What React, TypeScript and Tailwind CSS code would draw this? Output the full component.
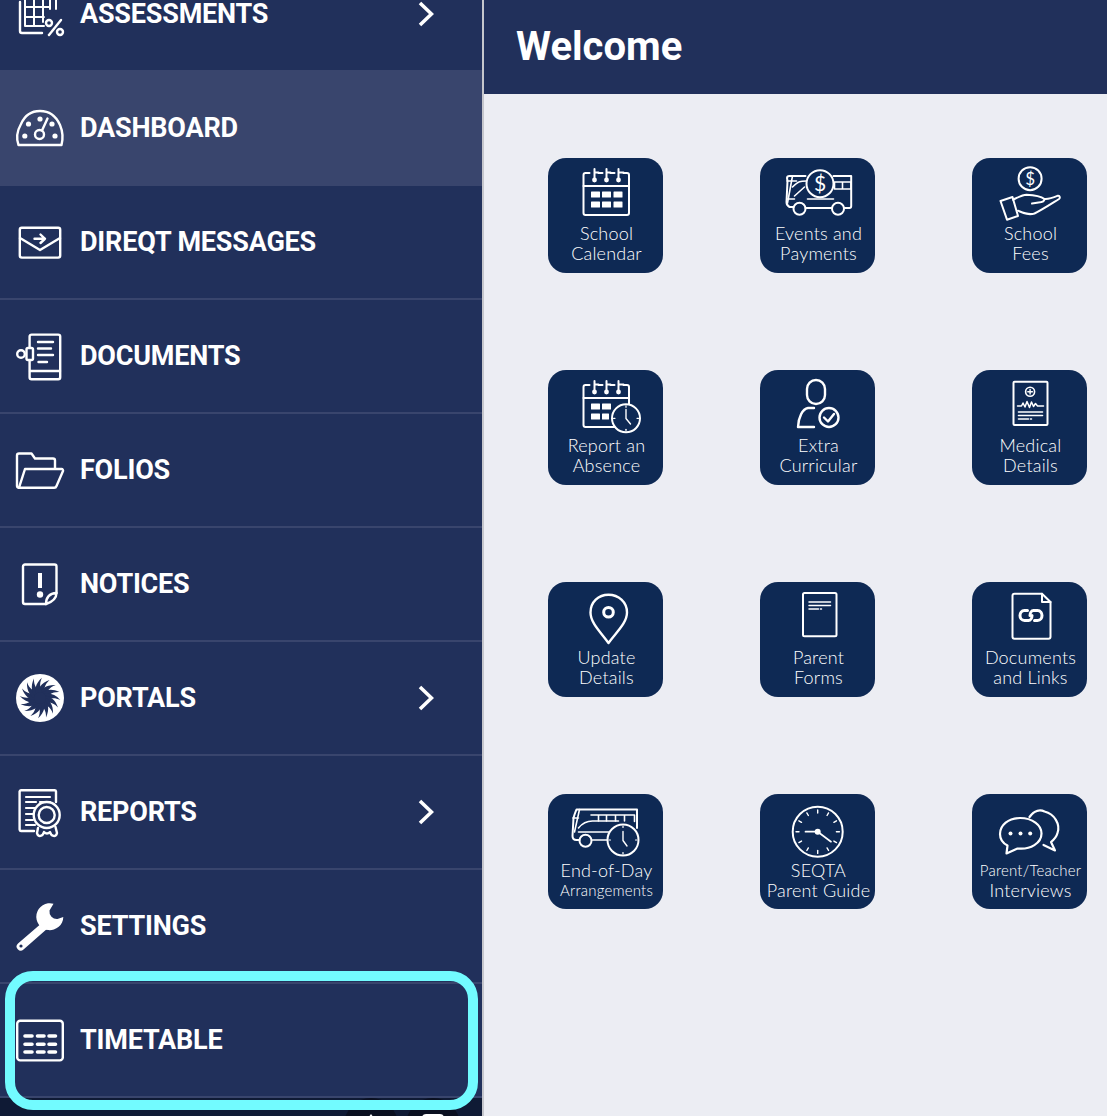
import type { ReactNode } from 'react'

const BG = '#21305b'
const TILE = '#0e2954'

function MenuSvg({ children }: { children: ReactNode }) {
  return (
    <svg width="48" height="48" viewBox="0 0 48 48" className="shrink-0 overflow-visible" fill="none" stroke="white" strokeWidth="2.4" strokeLinecap="round" strokeLinejoin="round">
      <g transform="translate(-16 0)">{children}</g>
    </svg>
  )
}

function TileSvg({ children }: { children: ReactNode }) {
  return (
    <svg width="115" height="66" viewBox="0 0 115 66" className="block shrink-0" fill="none" stroke="white" strokeWidth="2" strokeLinecap="round" strokeLinejoin="round">
      <g transform="translate(0.5 0)">{children}</g>
    </svg>
  )
}

// sidebar icons
const assessmentsIcon = (
  <MenuSvg>
    <path d="M20 12V41a2 2 0 0 0 2 2H42" />
    <path d="M25 0H56V19M25 0V36H44M25 8H56M25 17H49M25 27H44M34 0V36M43 0V32M50 0V19" strokeWidth="2" />
    <path d="M49 45L61 30" />
    <circle cx="49" cy="33" r="3" />
    <circle cx="60" cy="42" r="3" />
  </MenuSvg>
)

const dashboardIcon = (
  <MenuSvg>
    <path d="M18.5 41C16 34 17 27 21 20C25 11 32 7 40 7C49 7 56 12 60 21C63 28 63 35 61.5 41Z" />
    <circle cx="39.5" cy="30.5" r="4.5" />
    <path d="M42 26.5L47.5 14.5" />
    <g fill="white" stroke="none">
      <circle cx="28.5" cy="20" r="2.6" />
      <circle cx="40" cy="15" r="2.6" />
      <circle cx="52" cy="20" r="2.6" />
      <circle cx="24.8" cy="32" r="2.6" />
      <circle cx="55" cy="32" r="2.6" />
    </g>
  </MenuSvg>
)

const messagesIcon = (
  <MenuSvg>
    <rect x="19.8" y="9.8" width="40.4" height="29.8" rx="2" />
    <path d="M20 20L40 32L60 20" />
    <path d="M34.5 20.8H45M40.5 16.5L45 20.8L40.5 25" />
  </MenuSvg>
)

const documentsIcon = (
  <MenuSvg>
    <rect x="29.6" y="2.6" width="30.6" height="44.6" rx="2" />
    <path d="M30 39H60" />
    <path d="M38 10H53M38 16.5H51M38 23H53M38.5 30H47" />
    <rect x="26.5" y="16" width="6.5" height="12" rx="1.5" fill={BG} />
    <circle cx="21" cy="22" r="3.8" />
  </MenuSvg>
)

const foliosIcon = (
  <MenuSvg>
    <path d="M19 41.7A2 2 0 0 1 17 40V9.5A2 2 0 0 1 19 7.5H31.5L35 12.5H53A2 2 0 0 1 55 14.5V22" />
    <path d="M25 23H61.5A1.5 1.5 0 0 1 63 25L56.5 40A2.5 2.5 0 0 1 54 41.7H19Z" />
  </MenuSvg>
)

const noticesIcon = (
  <MenuSvg>
    <path d="M46 44H25A2 2 0 0 1 23 42V6.5A2 2 0 0 1 25 4.5H54.5A2 2 0 0 1 56.5 6.5V33" />
    <path d="M46 44C46 38 49 33.5 56.5 33C56.5 38 52 42 46 44Z" />
    <path d="M40 13V28" strokeWidth="4" strokeLinecap="butt" />
    <circle cx="40" cy="34.5" r="3.2" fill="white" stroke="none" />
  </MenuSvg>
)

const blades = Array.from({ length: 16 }, (_, i) => i * 22.5)

const portalsIcon = (
  <MenuSvg>
    <circle cx="40" cy="24" r="24" fill="white" stroke="none" />
    <g fill={BG} stroke="none">
      {blades.map(deg => (
        <path key={deg} d="M38 22C37 15 41 9 49.5 6C44 11 43.500 16 45 23Z" transform={`rotate(${deg} 40 24)`} />
      ))}
      <circle cx="40" cy="24" r="6" />
    </g>
  </MenuSvg>
)

const reportsIcon = (
  <MenuSvg>
    <path d="M34 43H21A1.5 1.5 0 0 1 19.6 41.5V3.5A1.5 1.5 0 0 1 21 2.2H54.5A1.5 1.5 0 0 1 56 3.5V14" />
    <path d="M26 9H50M26 14H36M40 14H50M26 20H40M26 26H33M26 32H33M26 37H35" strokeWidth="2.2" />
    <circle cx="46.7" cy="27" r="13" fill={BG} />
    <circle cx="46.7" cy="27" r="8" />
    <path d="M38 40L37 45C38 50 43 48 44 44C46 46 48 46 50 44C51 48 56 50 57 45L55.5 39" />
  </MenuSvg>
)

const settingsIcon = (
  <MenuSvg>
    <path d="M43 20L18 41.5A4 4 0 0 0 23.500 47.5L48 26Z" fill="white" stroke="none" />
    <path d="M53.5 1.7A13.5 13.5 0 1 0 63.3 15L57.5 17A7.5 7.5 0 0 1 49.5 8.5Z" fill="white" stroke="none" />
    <circle cx="21" cy="44" r="1.6" fill={BG} stroke="none" />
  </MenuSvg>
)

const timetableIcon = (
  <MenuSvg>
    <rect x="17.2" y="4.8" width="45.6" height="39.6" rx="3" />
    <g strokeWidth="3.6">
      <path d="M25 20H32M37.5 20H44M49 20H55.5" />
      <path d="M25 28.3H32M37.5 28.3H44M49 28.3H55.5" />
      <path d="M25 36H32M37.5 36H44M49 36H55.5" />
    </g>
  </MenuSvg>
)

const calendarBase = (
  <>
    <path d="M41 15H37A2 2 0 0 0 35 17V55A2 2 0 0 0 37 57H78.5A2 2 0 0 0 80.5 55V17A2 2 0 0 0 78.5 15H75M50 15H54M62 15H66" />
    <path d="M35 28H80.5" />
    <path d="M46 11V21M58 11V21M70 11V21M46 14.500H50M58 14.500H62M70 14.500H75" />
    <g fill="white" stroke="none">
      <circle cx="46" cy="22" r="2.4" />
      <circle cx="58" cy="22" r="2.4" />
      <circle cx="70" cy="22" r="2.4" />
    </g>
  </>
)

const clockTicks = (cx: number, cy: number, r: number) =>
  [0, 90, 180, 270].map(deg => (
    <path key={deg} d={`M${cx} ${cy - r + 1.5}V${cy - r + 3}`} strokeWidth="1.2" transform={`rotate(${deg} ${cx} ${cy})`} />
  ))

const tiles: { lines: [string, string]; icon: ReactNode; small?: [boolean, boolean]; shift?: boolean }[] = [
  {
    lines: ['School', 'Calendar'],
    icon: (
      <TileSvg>
        {calendarBase}
        <g fill="white" stroke="none">
          <rect x="42.500" y="33.500" width="9" height="6" rx="0.5" />
          <rect x="53.500" y="33.500" width="9" height="6" rx="0.5" />
          <rect x="65" y="33.500" width="9" height="6" rx="0.5" />
          <rect x="42.500" y="43.500" width="9" height="6" rx="0.5" />
          <rect x="53.500" y="43.500" width="9" height="6" rx="0.5" />
          <rect x="65" y="43.500" width="9" height="6" rx="0.5" />
        </g>
      </TileSvg>
    ),
  },
  {
    lines: ['Events and', 'Payments'],
    icon: (
      <TileSvg>
        <path d="M45 18H29C27 18 26.500 19 26.500 20L27 23L26 44C26 47 27 48 29 49H33M45 50H71M84 50H89C90.500 50 90.700 49 90.700 48V18H73" />
        <path d="M32 18L27 45M26.500 23H36M32 29C38 23 40 23 46 23M34 38L44 29M47 41H73M27 41H34" strokeWidth="1.600" />
        <path d="M74 24H90.500V31H74ZM82 24V31" strokeWidth="1.600" />
        <circle cx="39" cy="50.700" r="6" />
        <circle cx="77.500" cy="50.700" r="6" />
        <circle cx="59.500" cy="25.700" r="13.500" fill={TILE} />
        <text x="59.500" y="33" textAnchor="middle" fontSize="21" fontFamily="Lato, sans-serif" fill="white" stroke="none">$</text>
      </TileSvg>
    ),
  },
  {
    lines: ['School', 'Fees'],
    icon: (
      <TileSvg>
        <circle cx="57.600" cy="20.700" r="11.500" />
        <text x="57.600" y="27" textAnchor="middle" fontSize="17" fontFamily="Lato, sans-serif" fill="white" stroke="none">$</text>
        <path d="M28 43L40 39L45.500 58L34.500 61.700Z" />
        <path d="M40.600 41.700C46 39 50 36.700 54 36.700C60 37 68 38 72 41C76 41.500 80 40 85.500 37.700C87.500 37.500 87.800 40 86.500 41C80 45 71 51 62 55.500C56 57.500 51 55 45.500 52.700" />
        <path d="M72 41C72 43.500 70 44.300 66 44.600L59.500 45.500" />
      </TileSvg>
    ),
  },
  {
    lines: ['Report an', 'Absence'],
    icon: (
      <TileSvg>
        {calendarBase}
        <g fill="white" stroke="none">
          <rect x="42.500" y="33.500" width="9" height="6" rx="0.5" />
          <rect x="53.500" y="33.500" width="9" height="6" rx="0.5" />
          <rect x="42.500" y="43.500" width="9" height="6" rx="0.5" />
          <rect x="53.500" y="43.500" width="7" height="6" rx="0.5" />
        </g>
        <circle cx="77.500" cy="48.300" r="14" fill={TILE} />
        {clockTicks(77.5, 48.3, 14)}
        <path d="M77.500 39.500V48.500L82 54" strokeWidth="1.400" />
      </TileSvg>
    ),
  },
  {
    lines: ['Extra', 'Curricular'],
    icon: (
      <TileSvg>
        <g strokeWidth="2.400">
          <rect x="46.500" y="10" width="18" height="24" rx="9" />
          <path d="M53.500 38H47.500C42 39 38 47 37.500 57H53.500" />
          <circle cx="68.500" cy="47.500" r="9.500" />
          <path d="M63.500 47.500L67.500 51.500L73.500 44" />
        </g>
      </TileSvg>
    ),
  },
  {
    lines: ['Medical', 'Details'],
    icon: (
      <TileSvg>
        <rect x="41" y="11.700" width="34" height="43.300" rx="1" />
        <circle cx="57.600" cy="21.700" r="4.500" strokeWidth="1.600" />
        <path d="M55.300 21.700H59.900M57.600 19.400V24" strokeWidth="1.400" />
        <path d="M45 36H49L50.500 33L52.500 37L54.500 31.500L57 37.500L59 32L61 36.500L63 33.500L65 36H71" strokeWidth="1.500" />
        <path d="M46 42H70M46 45.500H70" strokeWidth="1.600" />
        <path d="M46 49H56M58 49H59" strokeWidth="1.600" />
      </TileSvg>
    ),
  },
  {
    lines: ['Update', 'Details'],
    icon: (
      <TileSvg>
        <path d="M60 61C52 50 42 41 42 30.500C42 20 50 12.700 60 12.700C70 12.700 78.500 20 78.500 30.500C78.500 41 68 50 60 61Z" strokeWidth="2.400" />
        <circle cx="60" cy="30.300" r="4.800" strokeWidth="3" />
      </TileSvg>
    ),
  },
  {
    lines: ['Parent', 'Forms'],
    icon: (
      <TileSvg>
        <rect x="42.500" y="11" width="33.500" height="43.300" rx="1.500" />
        <path d="M48.500 20H70M48.500 23.500H70M48.500 27H58M60 27H61" strokeWidth="1.500" />
      </TileSvg>
    ),
  },
  {
    lines: ['Documents', 'and Links'],
    icon: (
      <TileSvg>
        <path d="M69.500 11.700H42A2 2 0 0 0 40 13.700V54.700A2 2 0 0 0 42 56.700H76A2 2 0 0 0 78 54.700V20Z" />
        <path d="M69.500 11.700V20H78" />
        <g strokeWidth="3">
          <path d="M55 28.500H52C49 28.500 47.500 31 47.500 33.500C47.500 36 49 38.500 52 38.500H56C58 38.500 59.500 36 59.500 33.500" />
          <path d="M62 38.500H65C68 38.500 69.500 36 69.500 33.500C69.500 31 68 28.500 65 28.500H61C59 28.500 57.500 31 57.500 33.500" />
        </g>
      </TileSvg>
    ),
  },
  {
    lines: ['End-of-Day', 'Arrangements'],
    small: [false, true],
    shift: true,
    icon: (
      <TileSvg>
        <path d="M31 46H28C25 46 24 44 24 42L25 24C26 20 27.500 17 28 15.500H88.500V34" />
        <path d="M24.500 24H30M31 15.500L26 38M44 46H60M30 34C34 29 38 27 44 27H70M30 38H60" strokeWidth="1.600" />
        <path d="M42.500 21H86V27.500M50 21V27M58 21V27M67 21V27M76 21V27" strokeWidth="1.600" />
        <circle cx="37" cy="46.700" r="6" />
        <circle cx="74.500" cy="46" r="15.500" fill={TILE} />
        {clockTicks(74.5, 46, 15.5)}
        <path d="M74.500 37.500V46.500L78.500 52" strokeWidth="1.400" />
      </TileSvg>
    ),
  },
  {
    lines: ['SEQTA', 'Parent Guide'],
    shift: true,
    icon: (
      <TileSvg>
        <circle cx="57.200" cy="37.700" r="25" />
        <g strokeWidth="1.400">
          {[0, 30, 60, 90, 120, 150, 180, 210, 240, 270, 300, 330].map(deg => (
            <path key={deg} d="M57.200 16V19" transform={`rotate(${deg} 57.200 37.700)`} />
          ))}
        </g>
        <path d="M45 37.700H57.200L70.500 47.700" strokeWidth="1.700" />
        <circle cx="57.200" cy="37.700" r="3" fill="white" stroke="none" />
      </TileSvg>
    ),
  },
  {
    lines: ['Parent/Teacher', 'Interviews'],
    small: [true, false],
    shift: true,
    icon: (
      <TileSvg>
        <g strokeWidth="2.200">
          <path d="M57 23C62 16 68 15.500 72 17.500C82 20 88 30 85 39C84 43 81 46 78.500 48L82.500 56.500L71 51" />
          <path d="M47.500 24C36 24 27.500 31 27.500 40C27.500 45 30 49 35 51.500L34 59.500L45 54.500C58 56 69 49 69 39.500C69 31 60 24 47.500 24Z" fill={TILE} />
        </g>
        <g fill="white" stroke="none">
          <circle cx="38" cy="39.500" r="2" />
          <circle cx="48" cy="39.500" r="2" />
          <circle cx="57.700" cy="39.500" r="2" />
        </g>
      </TileSvg>
    ),
  },
]

const menu: { label: string; icon: ReactNode; arrow?: boolean; active?: boolean }[] = [
  { label: 'ASSESSMENTS', icon: assessmentsIcon, arrow: true },
  { label: 'DASHBOARD', icon: dashboardIcon, active: true },
  { label: 'DIREQT MESSAGES', icon: messagesIcon },
  { label: 'DOCUMENTS', icon: documentsIcon },
  { label: 'FOLIOS', icon: foliosIcon },
  { label: 'NOTICES', icon: noticesIcon },
  { label: 'PORTALS', icon: portalsIcon, arrow: true },
  { label: 'REPORTS', icon: reportsIcon, arrow: true },
  { label: 'SETTINGS', icon: settingsIcon },
  { label: 'TIMETABLE', icon: timetableIcon },
]

export default function App() {
  return (
    <div className="relative flex h-[1116px] w-[1107px] overflow-hidden bg-[#ecedf3] font-['Roboto',sans-serif]">
      {/* Sidebar */}
      <div className="flex w-[482px] shrink-0 flex-col bg-[#21305b]">
        <div className="-mt-[42px]">
          {menu.map(item => (
            <div
              key={item.label}
              className={`box-border flex h-[114px] items-center border-b-2 border-[#39456d] pl-4 ${
                item.active ? 'bg-[#39456d]' : ''
              }`}
            >
              {item.icon}
              <span className="ml-4 text-[27px] font-bold leading-none tracking-[-0.2px] text-white">{item.label}</span>
              {item.arrow && (
                <svg width="16" height="26" viewBox="0 0 16 26" className="ml-auto mr-[48px]" fill="none" stroke="white" strokeWidth="3.6">
                  <path d="M2 2L13.500 13L2 24" />
                </svg>
              )}
            </div>
          ))}
        </div>
        {/* phone nav bar peeking out */}
        <div className="flex flex-1 justify-end gap-2 overflow-hidden bg-[#0f1a35] pr-[22px]">
          <div className="flex h-[54px] w-[54px] shrink-0 justify-center rounded-full bg-[#0a0f20] pt-4">
            <div className="h-0 w-0 border-x-[6px] border-b-[8px] border-x-transparent border-b-white" />
          </div>
          <div className="flex h-[54px] w-[54px] shrink-0 justify-center rounded-full bg-[#0a0f20] pt-4">
            <div className="h-4 w-[22px] rounded-t-sm bg-white" />
          </div>
        </div>
      </div>
      <div className="w-[2px] shrink-0 bg-[#c5c6cc]" />

      {/* Main */}
      <div className="flex min-w-0 flex-1 flex-col">
        <div className="flex h-[94px] shrink-0 items-center bg-[#21305b] pl-8">
          <h1 className="text-[40px] font-bold leading-none text-white">Welcome</h1>
        </div>
        <div className="grid grid-cols-[115px_115px_115px] gap-[97px] pl-16 pt-16">
          {tiles.map(tile => (
            <div key={tile.lines[0]} className="flex h-[115px] w-[115px] flex-col items-center overflow-hidden rounded-[18px] bg-[#0e2954] text-white">
              {tile.icon}
              <div className={`translate-x-px text-center font-['Lato',sans-serif] font-light leading-[19.500px] tracking-[0.2px] ${tile.shift ? 'mt-px' : ''}`}>
                {tile.lines.map((line, i) => (
                  <div key={line} className={`whitespace-nowrap ${tile.small?.[i] ? 'text-[15px]' : 'text-[18px]'}`}>
                    {line}
                  </div>
                ))}
              </div>
            </div>
          ))}
        </div>
      </div>

      {/* highlight ring */}
      <div className="pointer-events-none absolute left-[5px] top-[971px] h-[139px] w-[473px] rounded-[28px] border-[10px] border-[#72fbff]" />
    </div>
  )
}
